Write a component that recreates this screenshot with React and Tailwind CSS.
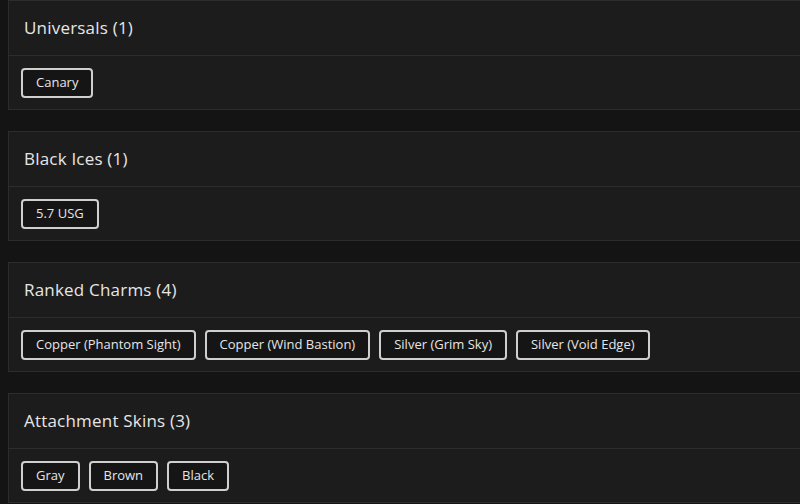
import React from 'react';

const sections = [
  { title: 'Universals', items: ['Canary'] },
  { title: 'Black Ices', items: ['5.7 USG'] },
  {
    title: 'Ranked Charms',
    items: ['Copper (Phantom Sight)', 'Copper (Wind Bastion)', 'Silver (Grim Sky)', 'Silver (Void Edge)'],
  },
  { title: 'Attachment Skins', items: ['Gray', 'Brown', 'Black'] },
];

const Section = ({ title, items }) => (
  <div className="w-[800px] border border-[#2c2c2c] bg-[#1c1c1c]">
    <div className="h-[55px] flex items-center px-[15px] border-b border-[#2c2c2c]">
      <h2 className="text-[17px] font-medium text-[#e6e6e6] tracking-[0.2px]">
        {title} ({items.length})
      </h2>
    </div>
    <div className="flex flex-wrap gap-[9px] px-3 pt-3 pb-[11px]">
      {items.map((item) => (
        <span
          key={item}
          className="h-[30px] flex items-center px-[13px] rounded-[4px] border-2 border-[#cfcfcf] bg-[#151515] text-[13px] text-[#e6e6e6]"
        >
          {item}
        </span>
      ))}
    </div>
  </div>
);

export default function App() {
  return (
    <div
      className="w-[800px] h-[504px] overflow-hidden bg-[#141414] pl-2"
      style={{ fontFamily: '"Open Sans", "Noto Sans", sans-serif' }}
    >
      <div className="flex flex-col gap-[21px]">
        {sections.map((s) => (
          <Section key={s.title} {...s} />
        ))}
      </div>
    </div>
  );
}
